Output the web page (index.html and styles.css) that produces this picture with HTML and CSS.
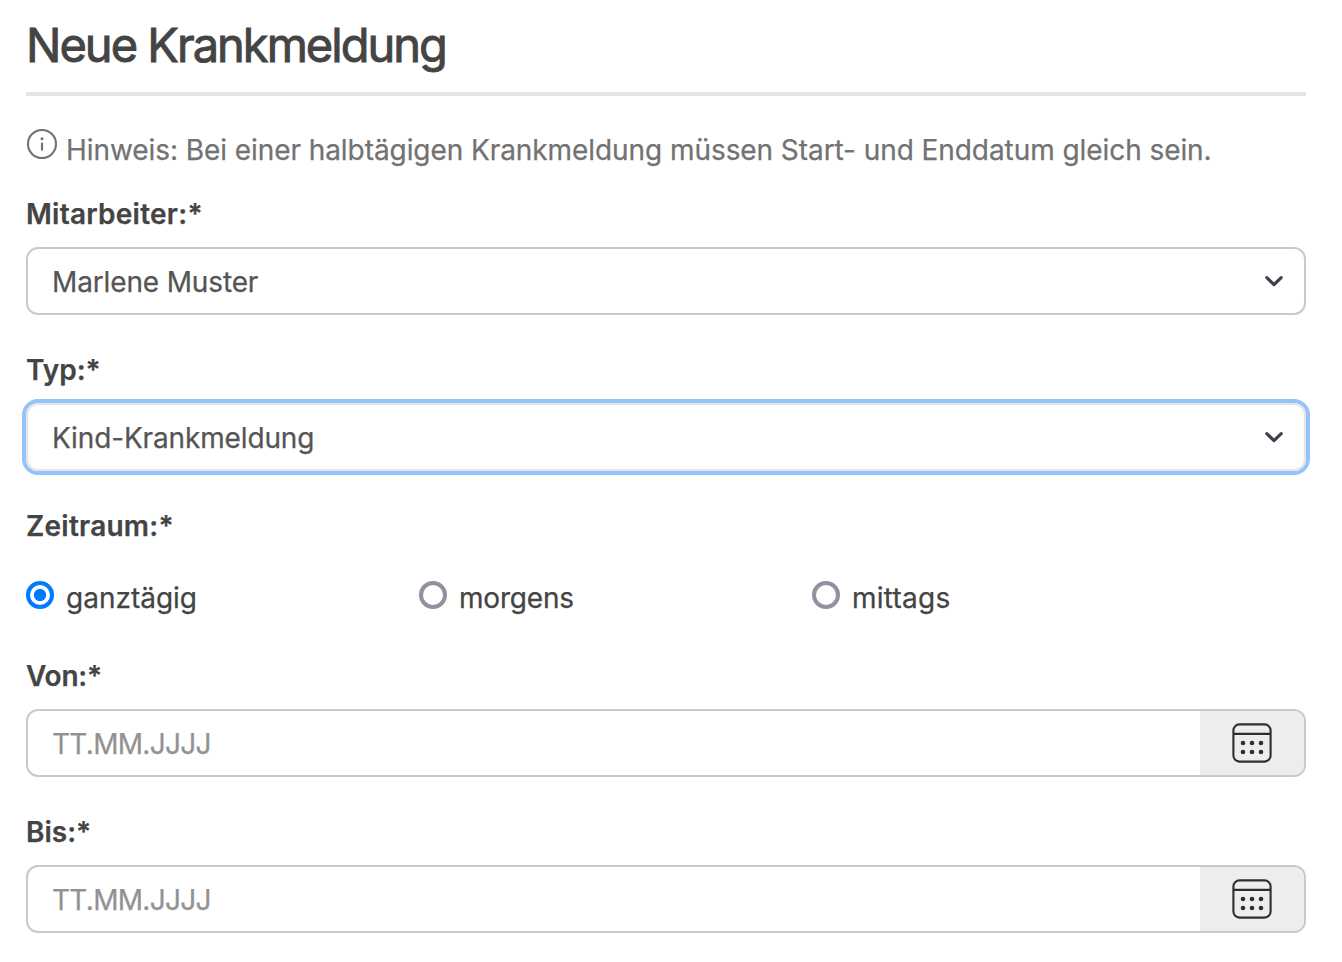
FILE: index.html
```html
<!DOCTYPE html>
<html lang="de">
<head>
<meta charset="utf-8">
<title>Neue Krankmeldung</title>
<link rel="stylesheet" href="styles.css">
</head>
<body>
<svg class="sprite" aria-hidden="true">
  <symbol id="chevron" viewBox="0 0 20 14"><path d="M2.8 3.6 10 10.6l7.2-7" fill="none" stroke="#3f3f4a" stroke-width="3.2" stroke-linecap="round" stroke-linejoin="round"/></symbol>
  <symbol id="calendar" viewBox="0 0 40 40"><g fill="none" stroke="#2e2e2e" stroke-width="2.1"><rect x="1.4" y="1.4" width="37.2" height="37.2" rx="6"/><path d="M1.5 10.9h37"/></g><g fill="#2e2e2e"><circle cx="11" cy="20" r="2.3"/><circle cx="20" cy="20" r="2.3"/><circle cx="29" cy="20" r="2.3"/><circle cx="11" cy="29" r="2.3"/><circle cx="20" cy="29" r="2.3"/><circle cx="29" cy="29" r="2.3"/></g></symbol>
</svg>
<main class="form">
  <h1 class="title"><span>Neue Krankmeldung</span></h1>
  <p class="hint">
    <svg class="info" viewBox="0 0 32 32"><circle cx="16" cy="16" r="14" fill="none" stroke="#727272" stroke-width="2.1"/><circle cx="16" cy="10.7" r="1.5" fill="#727272"/><path d="M16 15.5v6.2" stroke="#727272" stroke-width="2.2" stroke-linecap="round"/></svg>
    <span>Hinweis: Bei einer halbtägigen Krankmeldung müssen Start- und Enddatum gleich sein.</span>
  </p>
  <div class="field">
    <div class="label wide"><span>Mitarbeiter:*</span></div>
    <div class="control"><span class="value">Marlene Muster</span><svg class="chevron"><use href="#chevron"/></svg></div>
  </div>
  <div class="field">
    <div class="label"><span>Typ:*</span></div>
    <div class="control focused"><span class="value">Kind-Krankmeldung</span><svg class="chevron"><use href="#chevron"/></svg></div>
  </div>
  <div class="period">
    <div class="label wide"><span>Zeitraum:*</span></div>
    <div class="options">
      <label class="option"><span class="radio checked"></span><span>ganztägig</span></label>
      <label class="option tight"><span class="radio"></span><span>morgens</span></label>
      <label class="option wide"><span class="radio"></span><span>mittags</span></label>
    </div>
  </div>
  <div class="field">
    <div class="label tight"><span>Von:*</span></div>
    <div class="control"><span class="placeholder">TT.MM.JJJJ</span><span class="addon"><svg class="calendar"><use href="#calendar"/></svg></span></div>
  </div>
  <div class="field">
    <div class="label"><span>Bis:*</span></div>
    <div class="control"><span class="placeholder">TT.MM.JJJJ</span><span class="addon"><svg class="calendar"><use href="#calendar"/></svg></span></div>
  </div>
</main>
</body>
</html>
```

FILE: styles.css
```css
* { box-sizing: border-box; }
body { margin: 0; background: #fff; color: #444; font-family: Inter, "Liberation Sans", sans-serif; font-size: 28px; line-height: 40px; overflow: hidden; -webkit-text-stroke: 0.25px currentColor; }
.sprite { display: none; }
.form { padding: 16px 36px 0 26px; }
.title { margin: 0; padding-bottom: 18px; border-bottom: 4px solid #e4e5e9; font-size: 47px; line-height: 58px; font-weight: 400; letter-spacing: -1.98px; -webkit-text-stroke: 0.9px #444; }
.hint { display: flex; gap: 8px; margin: 34px 0 24px; color: #727272; white-space: nowrap; letter-spacing: -0.07px; }
.info { width: 32px; height: 32px; margin-top: -2px; flex: none; }
.field { margin-bottom: 35px; }
.label { font-weight: 600; margin-bottom: 13px; }
.wide { letter-spacing: 0.25px; }
.tight { letter-spacing: -0.2px; }
.control { display: flex; align-items: center; height: 68px; border: 2px solid #c9c9c9; border-radius: 12px; padding-left: 24px; overflow: hidden; }
.focused { border-color: #e4e5e8; box-shadow: 0 0 0 4px #93c2fd; }
.value { color: #555; padding-top: 2px; letter-spacing: -0.14px; }
.placeholder { color: #929292; padding-top: 2px; letter-spacing: -0.7px; }
.chevron { width: 20px; height: 14px; margin-left: auto; margin-right: 20px; }
.addon { display: flex; align-items: center; justify-content: center; align-self: stretch; width: 104px; margin-left: auto; background: #ededed; }
.calendar { width: 40px; height: 40px; }
.period { margin-bottom: 38px; }
.period .label { margin-bottom: 32px; }
.options { display: grid; grid-template-columns: 393px 393px 1fr; }
.option { display: flex; gap: 12px; }
.radio { width: 28px; height: 28px; margin-top: 3px; border: 4px solid #9291a1; border-radius: 50%; }
.checked { border-color: #007bff; background: radial-gradient(circle, #007bff 5.7px, #fff 6.5px); }
```
